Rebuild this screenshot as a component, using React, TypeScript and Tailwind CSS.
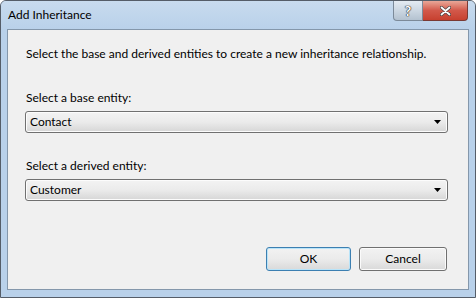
// Add Inheritance dialog (Windows 7 basic look)

const font = { fontFamily: 'Lato, "Noto Sans", sans-serif' };

const ComboBox = ({ value }: { value: string }) => (
  <div className="flex h-[22px] items-center justify-between rounded-[3px] border border-[#707070] bg-gradient-to-b from-[#f3f3f3] via-[#ebebeb] to-[#d6d6d6] pl-[4px] pr-[6px] shadow-[inset_0_0_0_1px_#fcfcfc]">
    <span className="leading-none text-black">{value}</span>
    <svg width="7" height="4" viewBox="0 0 7 4">
      <path d="M0 0H7L3.5 4Z" fill="#000" />
    </svg>
  </div>
);

const Button = ({ label, focused }: { label: string; focused?: boolean }) => (
  <div
    className={`flex h-[24px] items-center justify-center rounded-[3px] border bg-gradient-to-b from-[#f2f2f2] via-[#ebebeb] to-[#d9d9d9] text-black ${
      focused
        ? "w-[85px] border-[#3c7fb1] shadow-[inset_0_0_0_1px_#b9e4f9]"
        : "w-[88px] border-[#707070] shadow-[inset_0_0_0_1px_#fbfbfb]"
    }`}
  >
    {label}
  </div>
);

export default function App() {
  return (
    <div
      style={font}
      className="flex h-[298px] w-[476px] flex-col overflow-hidden rounded-t-[6px] border border-[#555d68] bg-[#b9d1ea] text-[12px]"
    >
      {/* title bar */}
      <div className="flex h-[28px] shrink-0 items-start justify-between bg-gradient-to-b from-[#c8dbee] to-[#b9d1ea]">
        <span className="pl-[7px] pt-[6px] leading-[16px] text-black">Add Inheritance</span>
        <div className="mr-[7px] flex">
          <div className="flex h-[20px] w-[30px] items-center justify-center rounded-bl-[4px] border border-t-0 border-[#7c8a99] bg-gradient-to-b from-[#e4ebf2] via-[#ccd7e2] to-[#b4c2d0]">
            <span className="text-[14px] font-bold leading-none text-white [text-shadow:0_0_1px_#222,0_0_1px_#222,0_0_1px_#222]">?</span>
          </div>
          <div className="flex h-[20px] w-[45px] items-center justify-center rounded-br-[4px] border border-l-0 border-t-0 border-[#7a3a34] bg-gradient-to-b from-[#e8a798] via-[#d2584a] to-[#c7402f]">
            <svg width="11" height="10" viewBox="0 0 11 10">
              <path d="M1.5 1.5L9.5 8.5M9.5 1.5L1.5 8.5" stroke="#444" strokeWidth="3.2" strokeLinecap="round" />
              <path d="M1.5 1.5L9.5 8.5M9.5 1.5L1.5 8.5" stroke="#fff" strokeWidth="1.8" strokeLinecap="round" />
            </svg>
          </div>
        </div>
      </div>

      {/* client area */}
      <div className="mx-[6px] flex flex-1 flex-col border border-[#8497ab] bg-[#f0f0f0] pl-[17px] pr-[20px] text-black">
        <p className="mt-[16px] whitespace-nowrap pl-[1px] leading-[16px]">
          Select the base and derived entities to create a new inheritance relationship.
        </p>
        <p className="mt-[28px] pl-[1px] leading-[16px]">Select a base entity:</p>
        <div className="mt-[5px]">
          <ComboBox value="Contact" />
        </div>
        <p className="mt-[25px] pl-[1px] leading-[16px]">Select a derived entity:</p>
        <div className="mt-[5px]">
          <ComboBox value="Customer" />
        </div>
        <div className="mt-[46px] flex justify-end gap-[8px] pr-[1px]">
          <Button label="OK" focused />
          <Button label="Cancel" />
        </div>
      </div>
      <div className="h-[7px] shrink-0" />
    </div>
  );
}
